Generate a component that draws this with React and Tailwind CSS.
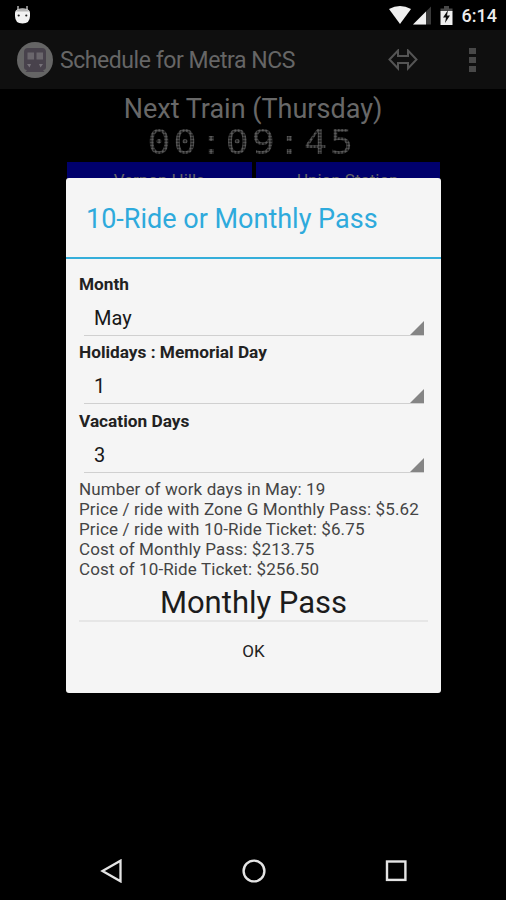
import React, { useState } from 'react';

const StatusBar = () => {
    return (
        <div className="flex h-[30px] items-center justify-between bg-black pl-[14px] pr-[9px]">
            <svg className="h-5 w-[17px]" viewBox="0 0 17 20">
                <path d="M4 1v4M13 1v4" stroke="#a5a5a5" strokeWidth="1.6" />
                <path d="M1 8Q1 3.5 8.5 3.5Q16 3.5 16 8V11Q16 18.500 8.500 18.500Q1 18.500 1 11Z" fill="#f2f2f2" />
                <path d="M2 6.500Q4 3.500 8.500 3.500Q13 3.500 15 6.500Z" fill="#b5b5b5" />
                <circle cx="4.700" cy="10.500" r="1.100" fill="#222" />
                <circle cx="12.300" cy="10.500" r="1.100" fill="#222" />
            </svg>
            <div className="flex items-center">
                <svg className="h-5 w-[64px]" viewBox="0 0 64 20">
                    {/* wifi */}
                    <path d="M0 4Q11 -2 22 4L11 19Z" fill="#f0f0f0" />
                    {/* signal */}
                    <path d="M24 19.500L42 1.500V19.500Z" fill="#3a3a3a" />
                    <path d="M24 19.500L37 6.500V19.500Z" fill="#f0f0f0" />
                    {/* battery */}
                    <path d="M55 1h5v2.500h3.500v3H51.500v-3H55Z" fill="#484848" />
                    <path d="M51.500 6H63.500V20H51.500Z" fill="#f0f0f0" />
                    <path d="M59 5L54 12.500h3L56 18l5-7.500h-3Z" fill="#111" />
                </svg>
                <div className="ml-[9px] pt-[2px] text-[18px] font-medium leading-5 text-[#ececec]">6:14</div>
            </div>
        </div>
    )
}

const ActionBar = () => {
    return (
        <div className="flex h-[59px] items-center bg-[#0f0f0f] pl-[17px] pr-[30px] text-[#666]">
            <svg className="h-[38px] w-9" viewBox="0 0 36 38">
                <circle cx="18" cy="19" r="18" fill="#656565" />
                <path d="M11 7H25Q29 7 29 11V26Q29 29 26 29L27.500 31H8.500L10 29Q7 29 7 26V11Q7 7 11 7Z" fill="#48424c" />
                <path d="M10.500 11.500h6.500v7h-6.500ZM19.500 11.500H26v7h-6.500Z" fill="#6a666c" />
                <path d="M10 23h4l-1.500 3.500ZM22 23h4l-2.500 3.500Z" fill="#77737a" />
            </svg>
            <div className="ml-[7px] whitespace-nowrap pt-[2px] text-[23px] leading-8 tracking-[-0.440px]">Schedule for Metra NCS</div>
            <svg className="ml-auto h-[22px] w-[30px]" viewBox="0 0 30 22">
                <path d="M1.500 10.500L10 1.500V7H20V1.500L28.500 10.500L20 19.500V14H10V19.500Z" fill="none" stroke="#555" strokeWidth="2" />
            </svg>
            <div className="ml-[51px] flex flex-col gap-[3px]">
                <div className="h-[6px] w-[7px] bg-[#484848]"></div>
                <div className="h-[6px] w-[7px] bg-[#484848]"></div>
                <div className="h-[6px] w-[7px] bg-[#484848]"></div>
            </div>
        </div>
    )
}

const Countdown = () => {
    return (
        <div className="flex flex-col items-center">
            <div className="mt-1 h-8 whitespace-nowrap text-[27px] leading-8 text-[#686868]">Next Train (Thursday)</div>
            {/* led style digits */}
            <div className="mt-1 h-[27px] scale-x-[1.15] bg-[radial-gradient(circle,#5c5c5c_40%,#1a1a1a_75%)] bg-[length:3px_3px] bg-clip-text pr-[2px] font-['DejaVu_Sans_Mono',monospace] text-[34px] leading-[26px] tracking-[2.200px] text-transparent">00:09:45</div>
            <div className="mt-[6px] flex w-[374px] gap-1 pl-px">
                <div className="h-9 flex-1 bg-[#00006c] text-center text-[17px] leading-9 text-[#666]">Vernon Hills</div>
                <div className="h-9 flex-1 bg-[#00006c] text-center text-[17px] leading-9 text-[#666]">Union Station</div>
            </div>
        </div>
    )
}

const Spinner = (props) => {
    return (
        <div className="h-[68.500px]">
            <div className="h-[22px] whitespace-nowrap text-[17.250px] font-bold leading-[22px] text-[#222]">{props.label}</div>
            <div className="ml-[5px] mr-[4px] flex h-[41px] items-end justify-between border-b border-[#d0d0d0]">
                <div className="pl-[10px] text-[20px] leading-[34px] text-[#181818]">{props.value}</div>
                <svg className="h-[14px] w-[14px]" viewBox="0 0 14 14">
                    <path d="M14 0V14H0Z" fill="#858585" />
                </svg>
            </div>
        </div>
    )
}

const PassDialog = (props) => {
    const lines = [
        'Number of work days in May: 19',
        'Price / ride with Zone G Monthly Pass: $5.62',
        'Price / ride with 10-Ride Ticket: $6.75',
        'Cost of Monthly Pass: $213.75',
        'Cost of 10-Ride Ticket: $256.50',
    ]

    return (
        <div className="absolute left-[66px] top-[178px] h-[515px] w-[375px] rounded-[3px] bg-[#f5f5f5]">
            <div className="h-[81px] whitespace-nowrap border-b-2 border-[#35aeda] pl-5 text-[27px] leading-[82px] text-[#2eaadc]">10-Ride or Monthly Pass</div>
            <div className="px-[13px] pt-[13.500px]">
                <Spinner label="Month" value="May" />
                <Spinner label="Holidays : Memorial Day" value="1" />
                <Spinner label="Vacation Days" value="3" />
                <div className="mt-[0.500px] whitespace-nowrap text-[17px] leading-5 tracking-[0.120px] text-[#444]">
                    {lines.map((line) => <div key={line}>{line}</div>)}
                </div>
                <div className="h-[43px] border-b-2 border-[#e6e6e6] text-center text-[31px] leading-[47px] text-[#1c1c1c]">Monthly Pass</div>
                <button className="block h-[60px] w-full text-center text-[17px] text-[#222]" onClick={props.onClose}>OK</button>
            </div>
        </div>
    )
}

const NavBar = () => {
    return (
        <div className="mt-auto flex h-[58px] items-center justify-between pl-[100px] pr-[98px]">
            <svg className="h-6 w-6" viewBox="0 0 24 24" fill="none" stroke="#e4e4e4" strokeWidth="2.300">
                <path d="M2.500 12L20.500 1.700V22.300Z" />
            </svg>
            <svg className="h-6 w-6" viewBox="0 0 24 24" fill="none" stroke="#e4e4e4" strokeWidth="2.400">
                <circle cx="12" cy="12" r="10.400" />
            </svg>
            <svg className="h-6 w-6" viewBox="0 0 24 24" fill="none" stroke="#e4e4e4" strokeWidth="2.400">
                <rect x="3" y="2.500" width="18.400" height="18.400" />
            </svg>
        </div>
    )
}

const App = () => {
    const [open, setOpen] = useState(true);

    return (
        <div className="relative flex h-[900px] w-[506px] flex-col overflow-hidden bg-black font-[Roboto,sans-serif]">
            <StatusBar />
            <ActionBar />
            <Countdown />
            <NavBar />
            {open && <PassDialog onClose={() => setOpen(false)} />}
        </div>
    )
}

export default App;
